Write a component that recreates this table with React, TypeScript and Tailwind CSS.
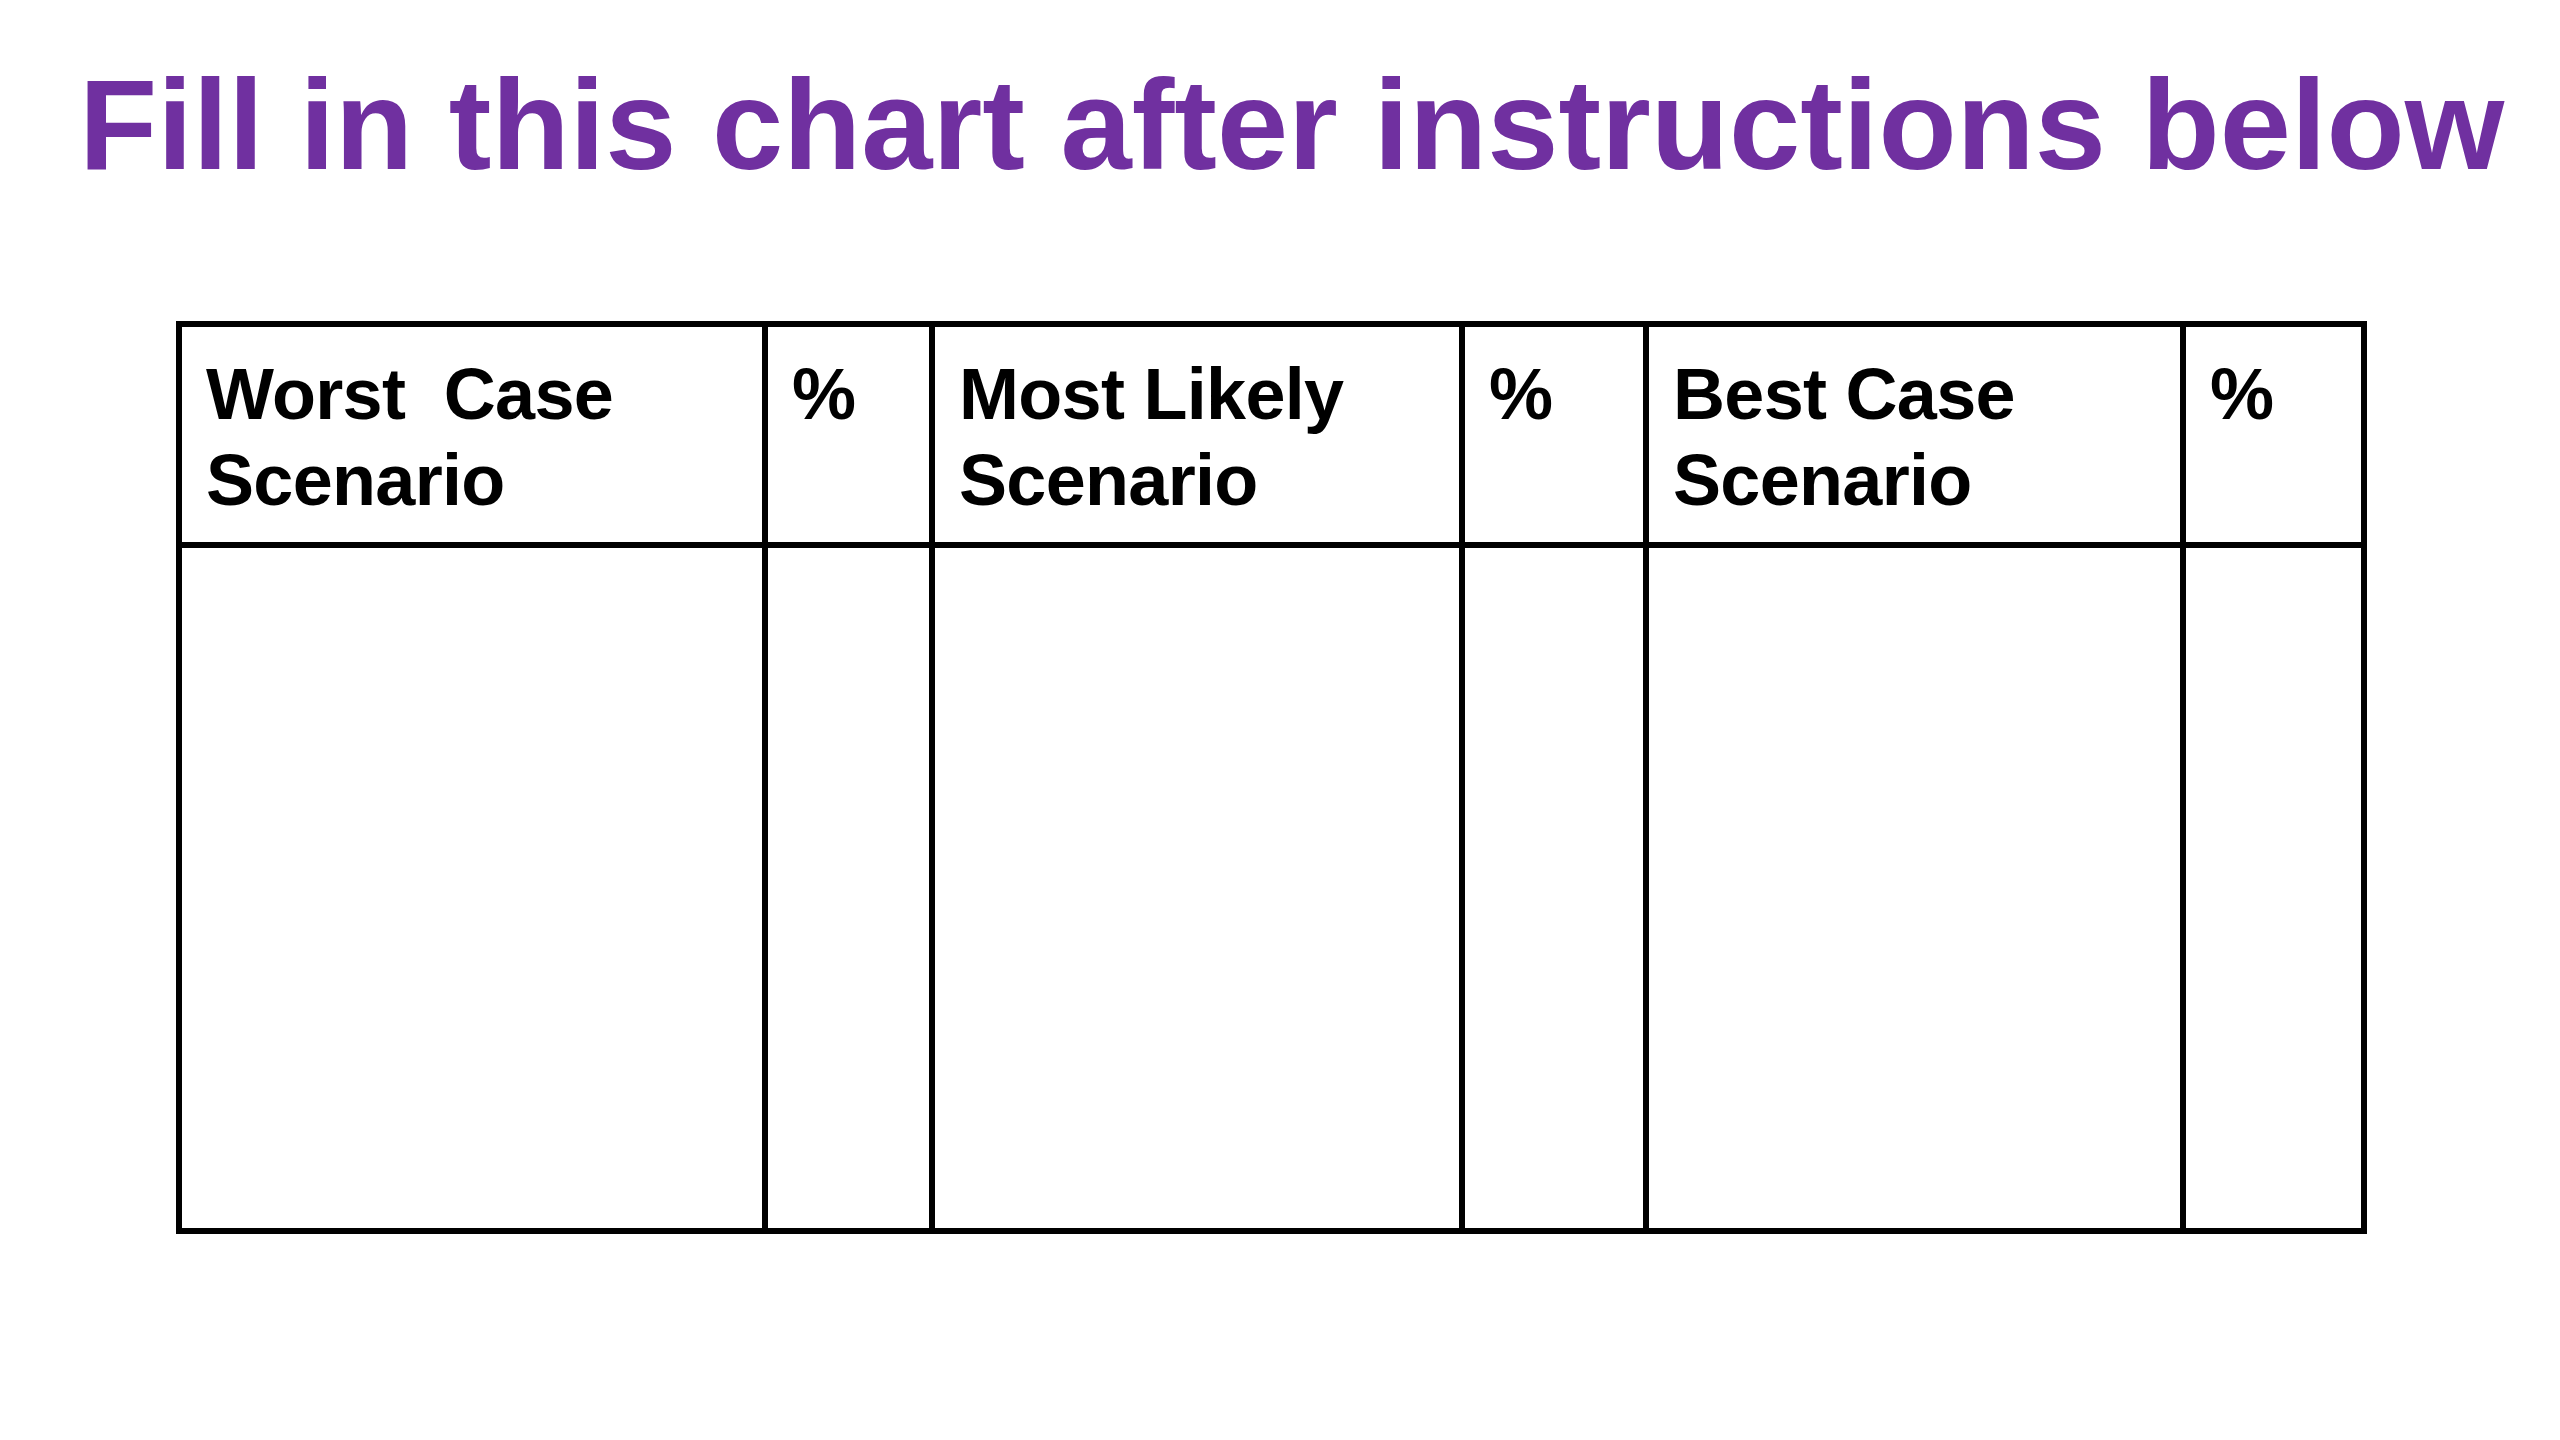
const headers = [
  { label: "Worst\u00a0 Case Scenario", w: "w-[586px]" },
  { label: "%", w: "w-[167px]" },
  { label: "Most Likely Scenario", w: "w-[530px]" },
  { label: "%", w: "w-[184px]" },
  { label: "Best Case Scenario", w: "w-[537px]" },
  { label: "%", w: "w-[181px]" },
];

export default function App() {
  return (
    <div className="w-[2560px] h-[1440px] bg-white font-['Liberation_Sans',Arial,sans-serif]">
      <h1 className="pt-[61px] pl-[79px] text-[128px] leading-[128px] font-bold text-[#7030a0] whitespace-nowrap">
        Fill in this chart after instructions below
      </h1>

      <div className="mt-[132px] ml-[176px] flex w-fit border-l-[6px] border-t-[6px] border-black">
        {headers.map((h, i) => (
          <div key={i} className={`${h.w} flex flex-col`}>
            <div className="h-[221px] border-r-[6px] border-b-[6px] border-black pl-6 pt-6 pr-4 text-[72px] leading-[86px] font-bold tracking-[-0.7px] text-black">
              {h.label}
            </div>
            <div className="h-[686px] border-r-[6px] border-b-[6px] border-black" />
          </div>
        ))}
      </div>
    </div>
  );
}
